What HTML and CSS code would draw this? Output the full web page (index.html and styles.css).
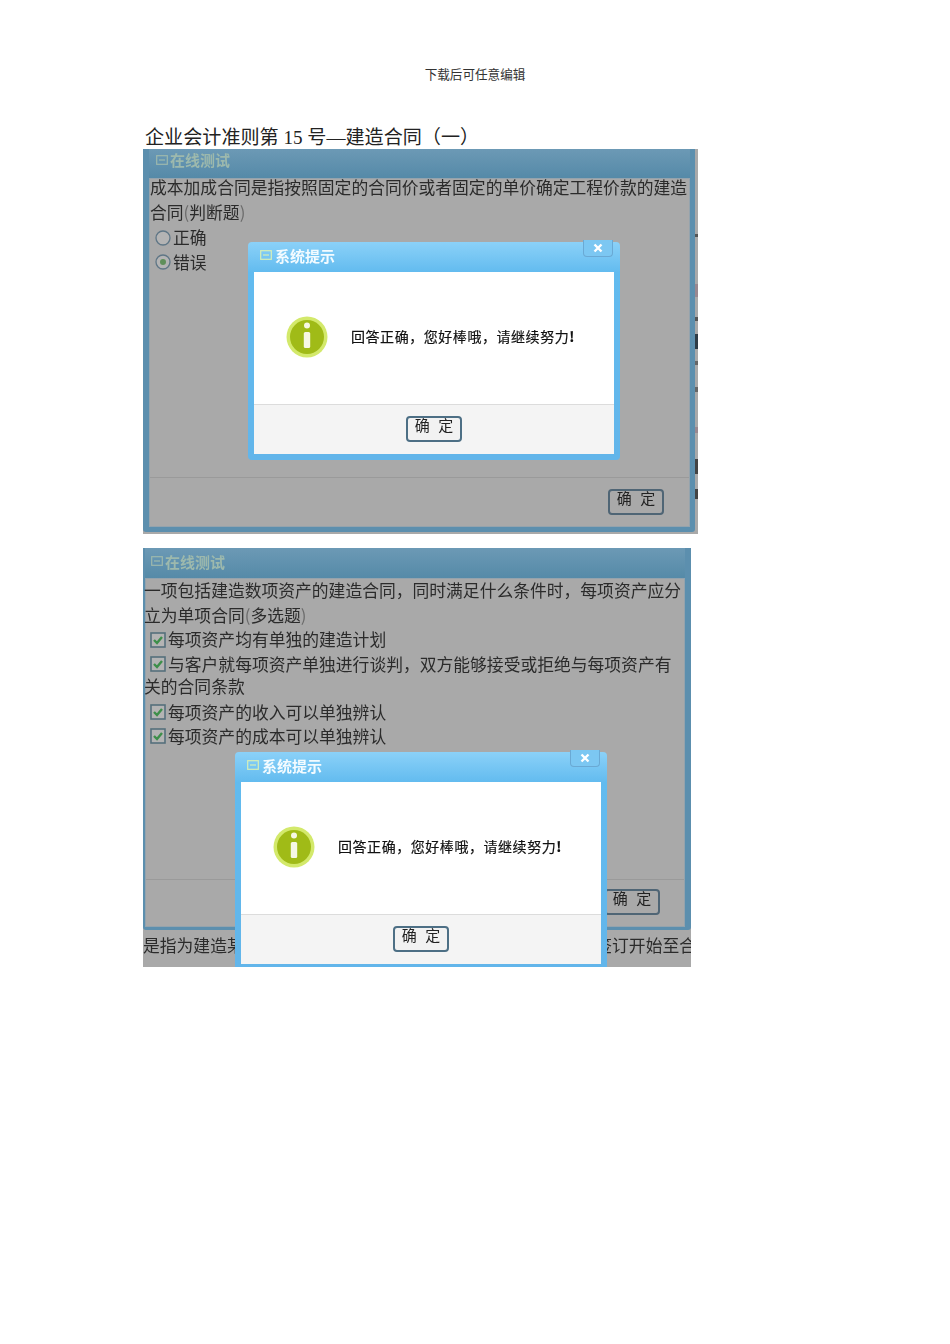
FILE: index.html
```html
<!DOCTYPE html>
<html lang="zh-CN">
<head>
<meta charset="utf-8">
<title>企业会计准则第15号</title>
<link rel="stylesheet" href="styles.css">
</head>
<body>
<header class="running-head">下载后可任意编辑</header>
<h1 class="doc-title">企业会计准则第 15 号—建造合同（一）</h1>

<section class="shot shot-one">
  <div class="window window-one">
    <div class="win-title">
      <svg class="title-icon" viewBox="0 0 12 10"><rect x="0.7" y="0.7" width="10.6" height="8.6" fill="none" stroke="currentColor" stroke-width="1.2"/><path d="M3 5h6" stroke="currentColor" stroke-width="1.2"/></svg>
      <span>在线测试</span>
    </div>
    <div class="win-body">
      <div class="question">
        <p class="line">成本加成合同是指按照固定的合同价或者固定的单价确定工程价款的建造</p>
        <p class="line">合同<span class="paren">(</span>判断题<span class="paren">)</span></p>
        <p class="line option">
          <svg class="mark" viewBox="0 0 16 16"><circle cx="8" cy="8" r="7" fill="#b4b4b4" stroke="#5f7686" stroke-width="1.3"/></svg>正确
        </p>
        <p class="line option wrap-first">
          <svg class="mark" viewBox="0 0 16 16"><circle cx="8" cy="8" r="7" fill="#b4b4b4" stroke="#5f7686" stroke-width="1.3"/><circle cx="8" cy="8" r="3" fill="#5f8f5a"/></svg>错误
        </p>
      </div>
      <div class="win-foot foot-one"><span class="btn btn-dim">确 定</span></div>
    </div>
  </div>
  <div class="edge-strip"></div>
  <div class="dialog dialog-one">
    <div class="dlg-title">
      <svg class="title-icon" viewBox="0 0 12 10"><rect x="0.7" y="0.7" width="10.6" height="8.6" fill="none" stroke="currentColor" stroke-width="1.2"/><path d="M3 5h6" stroke="currentColor" stroke-width="1.2"/></svg>
      <span>系统提示</span>
      <span class="dlg-close"><svg viewBox="0 0 10 10"><path d="M1.5 1.5l7 7M8.5 1.5l-7 7" stroke="#fff" stroke-width="2.4"/></svg></span>
    </div>
    <div class="dlg-body">
      <svg class="info-icon" viewBox="0 0 42 42"><circle cx="21" cy="21" r="20.5" fill="#d3e96b"/><circle cx="21" cy="21" r="17" fill="#a0bb17"/><circle cx="21" cy="9.5" r="3" fill="#f6f8e4"/><rect x="17.8" y="16" width="6.4" height="16" rx="1.5" fill="#f6f8e4"/></svg>
      <p class="dlg-msg">回答正确，您好棒哦，请继续努力<b>!</b></p>
    </div>
    <div class="dlg-foot"><span class="btn">确 定</span></div>
  </div>
</section>

<section class="shot shot-two">
  <div class="window window-two">
    <div class="win-title">
      <svg class="title-icon" viewBox="0 0 12 10"><rect x="0.7" y="0.7" width="10.6" height="8.6" fill="none" stroke="currentColor" stroke-width="1.2"/><path d="M3 5h6" stroke="currentColor" stroke-width="1.2"/></svg>
      <span>在线测试</span>
    </div>
    <div class="win-body">
      <div class="question">
        <p class="line">一项包括建造数项资产的建造合同，同时满足什么条件时，每项资产应分</p>
        <p class="line wrap-first">立为单项合同<span class="paren">(</span>多选题<span class="paren">)</span></p>
        <p class="line option">
          <svg class="mark" viewBox="0 0 16 16"><rect x="1" y="1" width="14" height="14" fill="#b4b4b4" stroke="#55707c" stroke-width="1.6"/><path d="M4 8l3 3 5-6" fill="none" stroke="#3d8f4a" stroke-width="2.4"/></svg>每项资产均有单独的建造计划
        </p>
        <p class="line option wrap-first">
          <svg class="mark" viewBox="0 0 16 16"><rect x="1" y="1" width="14" height="14" fill="#b4b4b4" stroke="#55707c" stroke-width="1.6"/><path d="M4 8l3 3 5-6" fill="none" stroke="#3d8f4a" stroke-width="2.4"/></svg>与客户就每项资产单独进行谈判，双方能够接受或拒绝与每项资产有
        </p>
        <p class="line wrap-rest">关的合同条款</p>
        <p class="line option wrap-first">
          <svg class="mark" viewBox="0 0 16 16"><rect x="1" y="1" width="14" height="14" fill="#b4b4b4" stroke="#55707c" stroke-width="1.6"/><path d="M4 8l3 3 5-6" fill="none" stroke="#3d8f4a" stroke-width="2.4"/></svg>每项资产的收入可以单独辨认
        </p>
        <p class="line option wrap-first">
          <svg class="mark" viewBox="0 0 16 16"><rect x="1" y="1" width="14" height="14" fill="#b4b4b4" stroke="#55707c" stroke-width="1.6"/><path d="M4 8l3 3 5-6" fill="none" stroke="#3d8f4a" stroke-width="2.4"/></svg>每项资产的成本可以单独辨认
        </p>
      </div>
      <div class="win-foot foot-two"><span class="btn btn-dim">确 定</span></div>
    </div>
  </div>
  <div class="tail-line"><span>是指为建造某</span><span>签订开始至合</span></div>
  <div class="dialog dialog-two">
    <div class="dlg-title">
      <svg class="title-icon" viewBox="0 0 12 10"><rect x="0.7" y="0.7" width="10.6" height="8.6" fill="none" stroke="currentColor" stroke-width="1.2"/><path d="M3 5h6" stroke="currentColor" stroke-width="1.2"/></svg>
      <span>系统提示</span>
      <span class="dlg-close"><svg viewBox="0 0 10 10"><path d="M1.5 1.5l7 7M8.5 1.5l-7 7" stroke="#fff" stroke-width="2.4"/></svg></span>
    </div>
    <div class="dlg-body">
      <svg class="info-icon" viewBox="0 0 42 42"><circle cx="21" cy="21" r="20.5" fill="#d3e96b"/><circle cx="21" cy="21" r="17" fill="#a0bb17"/><circle cx="21" cy="9.5" r="3" fill="#f6f8e4"/><rect x="17.8" y="16" width="6.4" height="16" rx="1.5" fill="#f6f8e4"/></svg>
      <p class="dlg-msg">回答正确，您好棒哦，请继续努力<b>!</b></p>
    </div>
    <div class="dlg-foot"><span class="btn">确 定</span></div>
  </div>
</section>
</body>
</html>
```

FILE: styles.css
```css
* { box-sizing: border-box; }
html, body { margin: 0; background: #fff; }
body {
  width: 950px;
  height: 1344px;
  padding: 67px 0 0 143px;
  font-family: "Liberation Serif", "Noto Sans CJK SC", serif;
  color: #222;
  overflow: hidden;
}
p { margin: 0; }

.running-head {
  width: 664px;
  height: 16px;
  font-size: 12.6px;
  line-height: 16px;
  text-align: center;
  color: #333;
}
.doc-title {
  margin: 0 0 0 2px;
  padding-top: 42px;
  height: 66px;
  font-size: 19.1px;
  line-height: 25px;
  font-weight: 400;
  color: #222;
  white-space: nowrap;
}

.shot {
  position: relative;
  display: flex;
  background: #a9a9a9;
  font-family: "Noto Sans CJK SC", "Liberation Sans", sans-serif;
  color: #2b2b2b;
  filter: blur(0.35px);
}
.shot-one { width: 555px; height: 385px; padding-bottom: 2px; margin-bottom: 14px; }
.shot-two { width: 548px; height: 419px; flex-direction: column; overflow: hidden; }

.window {
  display: flex;
  flex-direction: column;
  background: #5c8fae;
  border-radius: 0 0 3px 3px;
}
.window-one { width: 552px; height: 383px; padding: 0 5px 5px 6px; }
.window-two { width: 548px; height: 382px; padding: 0 6px 3px 2px; }
.edge-strip {
  width: 3px;
  background: linear-gradient(to bottom,
    #a9a9a9 0 85px, #555 85px 88px, #a9a9a9 88px 135px, #9a8890 135px 148px,
    #a9a9a9 148px 168px, #555 168px 172px, #a9a9a9 172px 185px,
    #2f3c46 185px 200px, #a9a9a9 200px 212px, #666 212px 216px, #a9a9a9 216px 238px,
    #666 238px 243px, #a9a9a9 243px 278px, #9a8890 278px 284px, #a9a9a9 284px 310px,
    #444 310px 325px, #a9a9a9 325px 340px, #444 340px 350px, #a9a9a9 350px);
}

.win-title {
  flex: none;
  display: flex;
  align-items: center;
  gap: 2px;
  font-size: 15px;
  font-weight: 700;
  color: #9db9ad;
  background: linear-gradient(#6c99b5, #558aa8);
}
.window-one .win-title { height: 29px; padding: 0 0 8px 7px; }
.window-two .win-title { height: 30px; padding: 0 0 4px 6px; }
.title-icon { width: 12px; height: 10px; flex: none; }
.win-body {
  flex: 1;
  display: flex;
  flex-direction: column;
  background: #a9a9a9;
  border: 1px solid #94a3ad;
  min-height: 0;
}
.question { flex: 1; font-size: 16.8px; }
.window-one .question { margin-top: -4px; }
.window-two .question { margin-top: -1px; margin-left: -2px; }
.line { height: 25px; line-height: 25px; white-space: nowrap; }
.wrap-first { height: 24px; line-height: 24px; }
.wrap-rest { height: 20px; line-height: 20px; margin-bottom: 4px; }
.paren { color: #6b6b6b; }
.option { display: flex; align-items: center; gap: 2px; padding-left: 5px; }
.window-two .option { padding-left: 6px; }
.mark { width: 16px; height: 16px; flex: none; }

.win-foot {
  flex: none;
  display: flex;
  justify-content: flex-end;
  border-top: 1px solid #9a9a9a;
}
.foot-one { height: 49px; padding: 11px 25px 0 0; }
.foot-two { height: 47px; padding: 9px 24px 0 0; }

.btn {
  width: 56px;
  height: 26px;
  display: flex;
  justify-content: center;
  font-family: "Noto Sans CJK SC", sans-serif;
  font-size: 15px;
  line-height: 14px;
  color: #222;
  background: #f2f2f2;
  border: 2px solid #4d6f85;
  border-radius: 4px;
  white-space: pre;
  word-spacing: 5px;
}
.btn-dim { background: #a9a9a9; border-color: #4f6575; }

.tail-line {
  flex: none;
  display: flex;
  justify-content: space-between;
  height: 37px;
  margin-right: -5px;
  font-size: 16.8px;
  line-height: 30px;
  white-space: nowrap;
  overflow: hidden;
}

.dialog {
  position: absolute;
  width: 372px;
  height: 218px;
  display: flex;
  flex-direction: column;
  padding: 0 6px 6px;
  background: linear-gradient(#8bd1f8, #62bbef 14%, #62b5ea);
  border-radius: 4px;
}
.dialog-one { left: 105px; top: 93px; }
.dialog-two { left: 92px; top: 204px; }

.dlg-title {
  position: relative;
  flex: none;
  height: 30px;
  display: flex;
  align-items: center;
  gap: 3px;
  padding: 0 0 4px 6px;
  font-size: 15px;
  font-weight: 700;
  color: #f3fbff;
}
.dlg-title .title-icon { color: #d6efb8; }
.dlg-close {
  position: absolute;
  right: 1px;
  top: -2px;
  width: 30px;
  height: 17px;
  display: flex;
  align-items: center;
  justify-content: center;
  background: #7cc7f2;
  border: 1px solid #6aa9d4;
  border-top: 0;
  border-radius: 0 0 4px 4px;
}
.dlg-close svg { width: 10px; height: 10px; }

.dlg-body {
  flex: none;
  height: 132px;
  display: flex;
  align-items: center;
  gap: 23px;
  padding: 0 0 2px 32px;
  background: #fff;
}
.info-icon { width: 42px; height: 42px; flex: none; }
.dlg-msg {
  padding-bottom: 3px;
  font-family: "Noto Sans CJK TC", "Noto Sans CJK SC", sans-serif;
  font-size: 14px;
  letter-spacing: 0.55px;
  line-height: 20px;
  color: #111;
  white-space: nowrap;
  -webkit-text-stroke: 0.2px #111;
}
.dlg-foot {
  flex: 1;
  display: flex;
  justify-content: center;
  padding-top: 11px;
  background: #f4f4f4;
  border-top: 1px solid #dcdcdc;
}
```
